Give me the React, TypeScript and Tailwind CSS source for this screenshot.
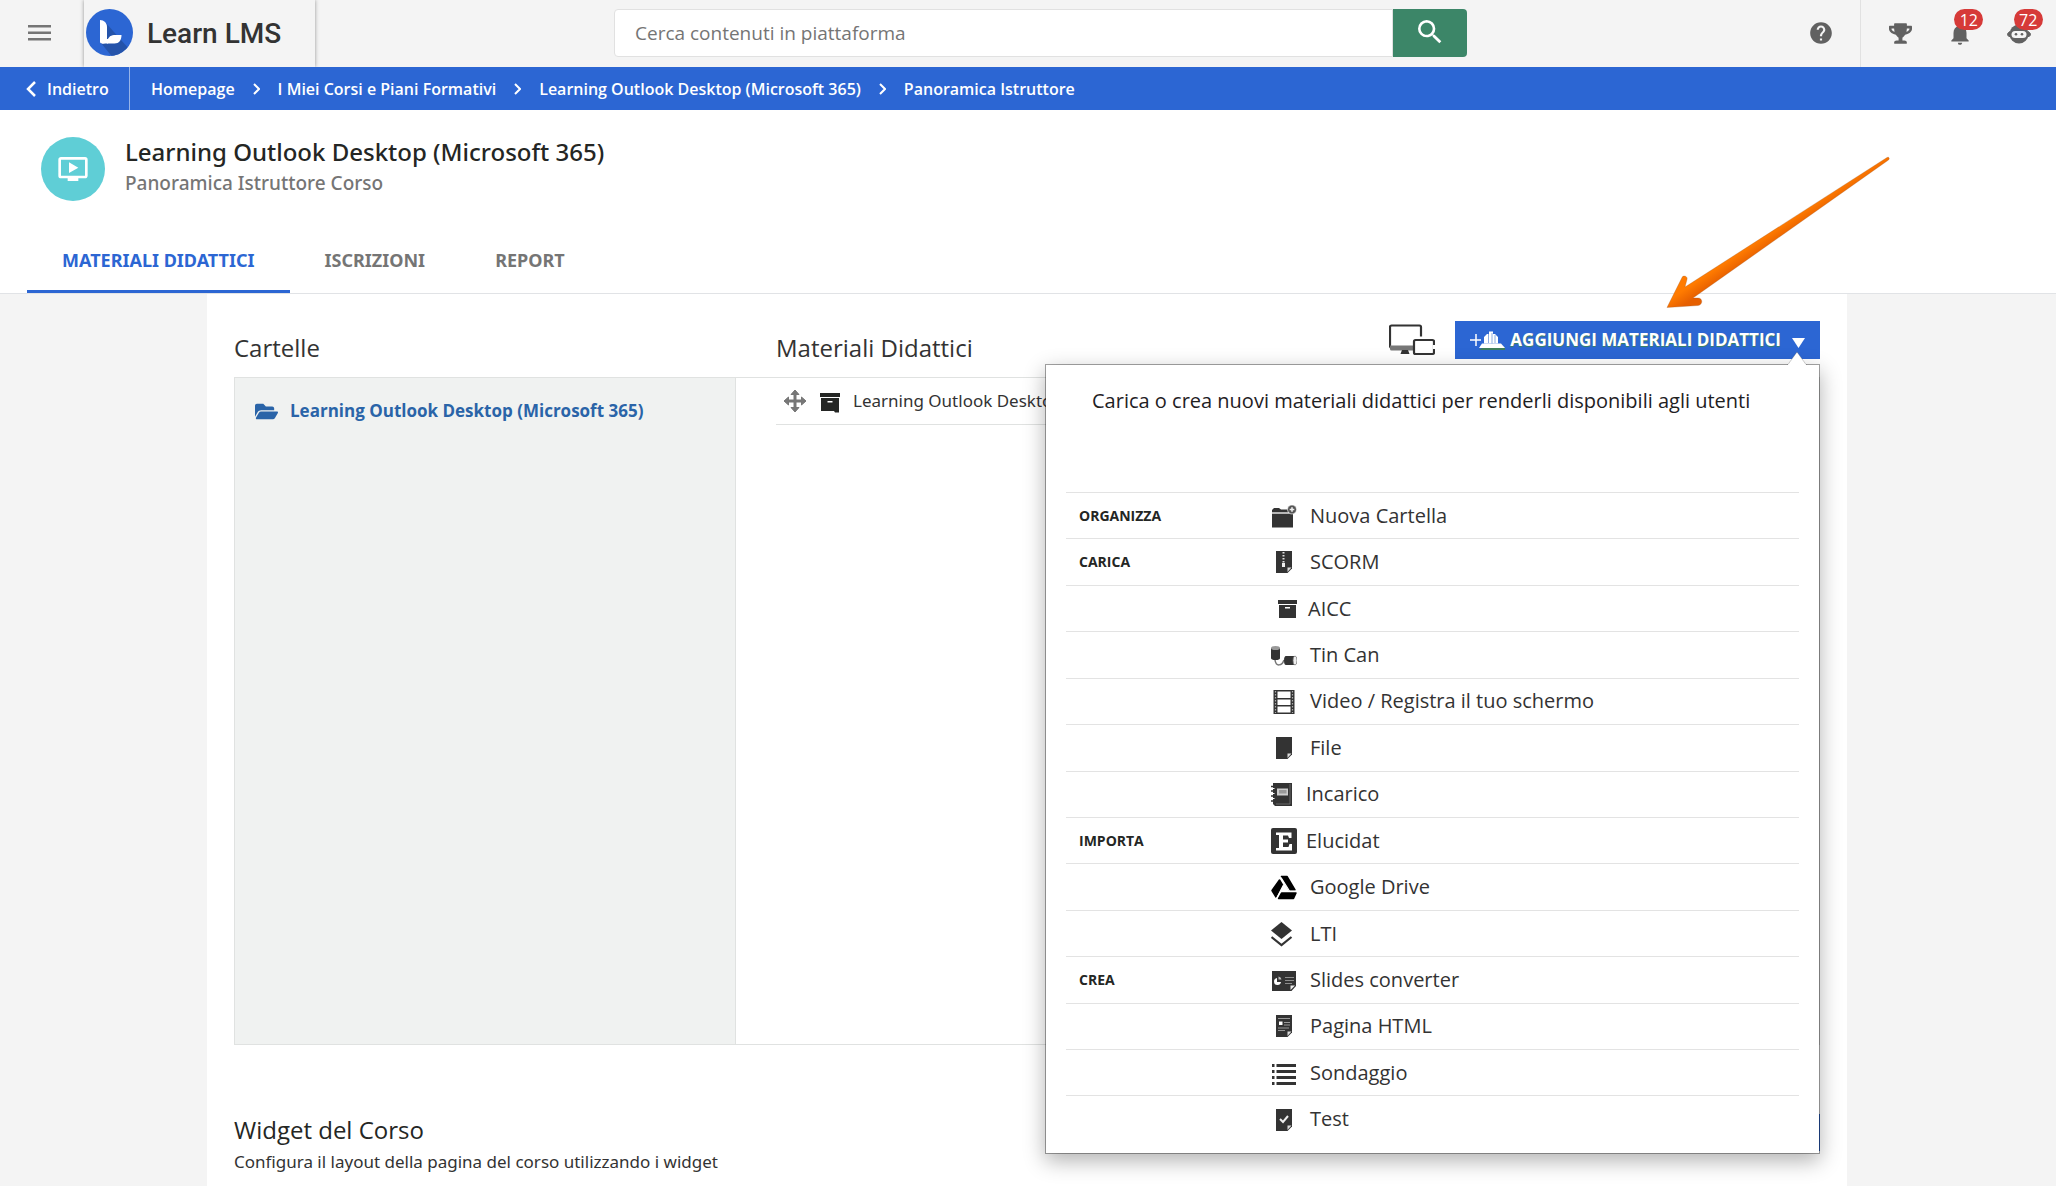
import React from "react";
import { MdHelp, MdNotifications, MdOndemandVideo, MdSearch } from "react-icons/md";
import { FaFolderOpen, FaTrophy } from "react-icons/fa";

const INK = "#333333";

function Glyph({ children }: { children: React.ReactNode }) {
  return (
    <svg viewBox="0 0 26 28" className="h-7 w-[26px] shrink-0" fill={INK} aria-hidden="true">
      {children}
    </svg>
  );
}

const page = "M5 3h16v17.500l-4.500 4.500H5z";
const fold = "M16.500 24v-4.500H20.500z";

const icons = {
  folder: (
    <Glyph>
      <path d="M1 10.500V8L3 6h5l2 1.500h7v3zM1 11.500h21v14H1z" />
      <path d="M1 11h17" stroke="#fff" strokeWidth="0.6" />
      <circle cx="21" cy="7.500" r="4.500" fill="#555" stroke="#fff" strokeWidth="0.6" />
      <path d="M21 5.200v4.600M18.700 7.500h4.600" stroke="#eee" strokeWidth="1.600" />
    </Glyph>
  ),
  scorm: (
    <Glyph>
      <path d={page} />
      <path d="M12.500 4v12" stroke="#ddd" strokeWidth="2" strokeDasharray="1.500 1.500" />
      <path d="M11 15h3v4h-3z" fill="#eee" />
      <path d={fold} fill="#ddd" />
    </Glyph>
  ),
  aicc: (
    <Glyph>
      <path d="M7 5h19v4H7zM8 10h17v13H8z" />
      <path d="M14 12h5v1.500h-5z" fill="#fff" />
    </Glyph>
  ),
  tincan: (
    <Glyph>
      <path d="M0 7h9v10a4.500 2 0 0 1-9 0z" />
      <ellipse cx="4.500" cy="7" rx="4.500" ry="2" fill="#999" />
      <path d="M4 19c1 7 7 6 9 0" fill="none" stroke="#777" strokeWidth="1.500" />
      <path d="M15 15h9v9h-9a2 4.500 0 0 1 0-9z" />
      <ellipse cx="24" cy="19.500" rx="2" ry="4.500" fill="#eee" stroke="#777" strokeWidth="0.8" />
    </Glyph>
  ),
  video: (
    <Glyph>
      <path d="M2.500 3h21v24h-21z" />
      <path d="M6.500 4.500h13V11h-13zM6.500 12.500h13v5.500h-13zM6.500 19.500h13v6h-13z" fill="#fff" />
      <path d="M4.500 4v22M21.500 4v22" stroke="#aaa" strokeWidth="1.200" strokeDasharray="1.500 1.500" />
    </Glyph>
  ),
  file: (
    <Glyph>
      <path d={page} />
      <path d={fold} fill="#ddd" />
    </Glyph>
  ),
  task: (
    <Glyph>
      <path d="M2 3h19v23H4l-2-2z" />
      <path d="M0 6.500h4M0 11h4M0 16h4M0 21h4" stroke="#333" strokeWidth="1.500" />
      <path d="M1 8.500h2.500M1 13.500h2.500M1 18.500h2.500" stroke="#fff" strokeWidth="1.200" />
      <path d="M6 8.500h11v7H6z" fill="#ccc" />
      <path d="M8 10h7.500v3.500H8z" fill="#999" />
      <path d="M19 4v20H5" fill="none" stroke="#777" strokeWidth="0.8" />
    </Glyph>
  ),
  elucidat: (
    <Glyph>
      <rect y="1" width="26" height="26" rx="2" />
      <path
        d="M5 5.500h15.500v5.500h-2.500l-1-2.500h-5v4h5v3h-5v4.500h5.500l1-3h2.500v6.500H5v-2.500h3v-13H5z"
        fill="#fff"
      />
    </Glyph>
  ),
  drive: (
    <Glyph>
      <g fill="#000" stroke="#000" strokeWidth="1.500" strokeLinejoin="round">
        <path d="M10.500 3.500h5.500l8 13.500h-5.500z" />
        <path d="M8.500 7l3 5L5 24l-4-6.500z" />
        <path d="M10.500 20H25l-2.500 5.500h-15z" />
      </g>
      <path d="M10 4.500L18.500 18H26M12.500 12L5.500 25.500" stroke="#fff" strokeWidth="1.200" fill="none" />
    </Glyph>
  ),
  lti: (
    <Glyph>
      <path d="M10.500 2l10.500 8.500L10.500 19 0 10.500z" />
      <path d="M0.500 17l10 8 10-8" fill="none" stroke={INK} strokeWidth="2.200" />
    </Glyph>
  ),
  slides: (
    <Glyph>
      <path d="M1 5h24v15l-4.500 5H1z" />
      <path d="M6 12a3.500 3.500 0 1 0 4 4H6z" fill="#fff" />
      <path d="M7.500 10.500a3.500 3.500 0 0 1 3 3h-3z" fill="#bbb" />
      <path d="M14 11.500h9M14 14.500h9M14 17.500h7" stroke="#999" strokeWidth="0.9" />
      <path d="M19.500 24v-4.500H24z" fill="#eee" />
    </Glyph>
  ),
  html: (
    <Glyph>
      <path d={page} />
      <path d="M7 6.500h12M13 10.500h6M13 13h6M7 16h11M7 18.500h7" stroke="#999" strokeWidth="1" />
      <path d="M8 9.500h3.500V13H8z" fill="#fff" />
      <path d={fold} fill="#ddd" />
    </Glyph>
  ),
  survey: (
    <Glyph>
      <path d="M5.500 5H25v3H5.500zM5.500 11H25v3H5.500zM5.500 17H25v3H5.500zM5.500 23H25v3H5.500z" />
      <path d="M1 5h2.500v3H1zM1 11h2.500v3H1zM1 17h2.500v3H1zM1 23h2.500v3H1z" />
    </Glyph>
  ),
  test: (
    <Glyph>
      <path d="M5 4h16v17.500l-4.500 4.500H5z" />
      <path d="M9 14l3 3 5-6" fill="none" stroke="#eee" strokeWidth="2" />
      <path d="M16.500 25v-4.500h4z" fill="#ddd" />
    </Glyph>
  ),
};

const menu: { group?: string; label: string; icon: keyof typeof icons; gap?: string }[] = [
  { group: "ORGANIZZA", label: "Nuova Cartella", icon: "folder" },
  { group: "CARICA", label: "SCORM", icon: "scorm" },
  { label: "AICC", icon: "aicc", gap: "gap-[11px]" },
  { label: "Tin Can", icon: "tincan" },
  { label: "Video / Registra il tuo schermo", icon: "video" },
  { label: "File", icon: "file" },
  { label: "Incarico", icon: "task", gap: "gap-[9px]" },
  { group: "IMPORTA", label: "Elucidat", icon: "elucidat", gap: "gap-[9px]" },
  { label: "Google Drive", icon: "drive" },
  { label: "LTI", icon: "lti" },
  { group: "CREA", label: "Slides converter", icon: "slides" },
  { label: "Pagina HTML", icon: "html" },
  { label: "Sondaggio", icon: "survey" },
  { label: "Test", icon: "test" },
];

function Logo() {
  return (
    <svg viewBox="0 0 47 47" className="size-[47px]" aria-hidden="true">
      <defs>
        <clipPath id="disc">
          <circle cx="23.500" cy="23.500" r="23.500" />
        </clipPath>
      </defs>
      <circle cx="23.500" cy="23.500" r="23.500" fill="#2c66d3" />
      <path d="M20 14l30 34-22 2L15 34z" fill="#2453aa" clipPath="url(#disc)" />
      <path d="M14 11c4 0 7 3 7 7v11c0 3-1 5-3 5.500h-2c-1.500 0-2-1-2-2z" fill="#fff" />
      <path d="M21 34.500c0-5 3-8.500 7-8.500h7.500c0 5-2.500 8.500-7 8.500z" fill="#fff" />
      <path d="M16 30h7l-1 4.500h-6z" fill="#fff" />
    </svg>
  );
}

function Robot() {
  return (
    <svg viewBox="0 0 24 24" className="size-6" aria-hidden="true">
      <circle cx="12" cy="12" r="9.500" fill="#616161" />
      <path d="M2.500 9.500L0 12.500l2.500 2.500zM21.500 9.500l2.500 3-2.500 2.500z" fill="#616161" stroke="#616161" />
      <rect x="4.500" y="9" width="15" height="7" rx="3.500" fill="#f4f4f4" />
      <circle cx="9" cy="12.200" r="1.300" fill="#616161" />
      <circle cx="15" cy="12.200" r="1.300" fill="#616161" />
    </svg>
  );
}

function Badge({ children }: { children: React.ReactNode }) {
  return (
    <span className="absolute left-6 top-[9px] flex h-[21px] w-[29px] items-center justify-center rounded-full bg-[#d63a38] text-base leading-none text-white">
      {children}
    </span>
  );
}

function Header() {
  return (
    <header className="flex h-[67px] items-stretch justify-between bg-[#f4f4f4]">
      <div className="flex items-stretch">
        <button aria-label="Menu" className="flex w-[84px] items-center pb-0.5 pl-7">
          <svg viewBox="0 0 23 16" className="h-4 w-[23px]" fill="#757575" aria-hidden="true">
            <path d="M0 0h23v2.500H0zM0 6.500h23v2.500H0zM0 13h23v2.500H0z" />
          </svg>
        </button>
        <a href="#" className="flex w-[231px] items-center gap-3.5 pl-0.5 shadow-[0_0_4px_rgba(0,0,0,0.4)]">
          <span className="pb-0.5">
            <Logo />
          </span>
          <span className="font-['Roboto',sans-serif] text-[28px] font-medium leading-8 text-[#333]">Learn LMS</span>
        </a>
      </div>
      <form className="mb-2.5 mt-[9px] flex w-[853px]">
        <input
          type="search"
          aria-label="Cerca contenuti in piattaforma"
          placeholder="Cerca contenuti in piattaforma"
          className="min-w-0 flex-1 rounded-l border border-[#e1e1e1] bg-white pl-5 text-[19px] text-[#333] placeholder:text-[#757575]"
        />
        <button type="button" aria-label="Cerca" className="flex w-[74px] items-center justify-center rounded-r bg-[#3c8668] pb-0.5 text-white">
          <MdSearch className="size-8" />
        </button>
      </form>
      <div className="flex w-[290px] items-stretch text-[#616161]">
        <button aria-label="Aiuto" className="flex w-[95px] items-center justify-end border-r border-[#e1e1e1] pb-0.5 pr-[26px]">
          <MdHelp className="size-[26px]" />
        </button>
        <div className="flex flex-1 pl-2.5 pr-[7px]">
          <button aria-label="Premi" className="flex flex-1 items-center justify-center">
            <FaTrophy className="size-[23px]" />
          </button>
          <button aria-label="Notifiche" className="relative flex flex-1 items-center justify-center">
            <MdNotifications className="size-[26px]" />
            <Badge>12</Badge>
          </button>
          <button aria-label="Assistente" className="relative flex flex-1 items-center justify-center">
            <Robot />
            <Badge>72</Badge>
          </button>
        </div>
      </div>
    </header>
  );
}

const crumbs = ["Homepage", "I Miei Corsi e Piani Formativi", "Learning Outlook Desktop (Microsoft 365)", "Panoramica Istruttore"];

function Breadcrumbs() {
  return (
    <nav className="flex h-[43px] items-stretch bg-[#2c66d3] font-semibold text-white">
      <a href="#" className="flex w-[130px] items-center gap-[11px] border-r border-white/50 pl-[26px]">
        <svg viewBox="0 0 10 16" className="h-4 w-2.5" fill="none" stroke="currentColor" strokeWidth="2.500" aria-hidden="true">
          <path d="M9 1L2 8l7 7" />
        </svg>
        Indietro
      </a>
      <ol className="flex items-center pl-[21px]">
        {crumbs.map((c, i) => (
          <li key={c} className="flex items-center">
            {i > 0 && (
              <svg viewBox="0 0 7 12" className="mx-[18px] h-3 w-[7px]" fill="none" stroke="currentColor" strokeWidth="2" aria-hidden="true">
                <path d="M1 1l5 5-5 5" />
              </svg>
            )}
            <a href="#">{c}</a>
          </li>
        ))}
      </ol>
    </nav>
  );
}

function CourseHead() {
  return (
    <section className="border-b border-[#e1e3e6] bg-white pt-[27px]">
      <div className="flex gap-5 pl-[41px]">
        <span className="flex size-16 items-center justify-center rounded-full bg-[#5fced6] text-white">
          <MdOndemandVideo className="size-8" />
        </span>
        <div className="font-['Noto_Sans',sans-serif] font-medium">
          <h1 className="text-2xl leading-[30px] text-[#242624]">Learning Outlook Desktop (Microsoft 365)</h1>
          <p className="text-[19px] leading-8 text-[#757575]">Panoramica Istruttore Corso</p>
        </div>
      </div>
      <div
        role="tablist"
        className="mt-[26px] flex h-[66px] pl-[27px] font-['Noto_Sans',sans-serif] text-lg font-bold text-[#757575]"
      >
        <button role="tab" aria-selected="true" className="border-b-3 border-[#2c66d3] px-[35px] pt-[3px] text-[#2c66d3]">
          MATERIALI DIDATTICI
        </button>
        <button role="tab" aria-selected="false" className="px-[35px]">
          ISCRIZIONI
        </button>
        <button role="tab" aria-selected="false" className="px-[35px]">
          REPORT
        </button>
      </div>
    </section>
  );
}

function Devices() {
  return (
    <svg viewBox="0 0 46 34" className="mt-[3px] h-[34px] w-[46px]" fill="none" aria-hidden="true">
      <path d="M24 23.500H2.500a1.500 1.500 0 0 1-1.500-1.500V3a1.500 1.500 0 0 1 1.500-1.500h28A1.500 1.500 0 0 1 32 3v9.500" stroke={INK} strokeWidth="2.200" />
      <path d="M1 21.500h23v5H2.500A1.500 1.500 0 0 1 1 25z" fill="#777" />
      <path d="M13 26h6l1.500 4h-9z" fill={INK} />
      <rect x="25" y="16" width="20" height="14" rx="1.500" stroke={INK} strokeWidth="2.200" fill="#fff" />
      <path d="M45 21v4" stroke="#fff" strokeWidth="2.200" />
    </svg>
  );
}

function AddMenu() {
  return (
    <div className="absolute right-0 top-[43px] z-10 w-[775px] border border-black/35 bg-white bg-clip-padding px-5 pb-[11px] pt-5 shadow-[0_7px_20px_rgba(0,0,0,0.3)]">
      <svg viewBox="0 0 20 15" className="absolute -top-3.5 right-3 h-[15px] w-5" aria-hidden="true">
        <path d="M0 14.500L10 1l10 13.500V15H0z" fill="#fff" />
        <path d="M0 13.500h1L10 1l9 12.500h1" fill="none" stroke="#000" strokeOpacity="0.2" />
      </svg>
      <p className="mb-[75px] pl-[26px] text-xl leading-8 text-[#1f211f]">
        Carica o crea nuovi materiali didattici per renderli disponibili agli utenti
      </p>
      <ul className="flex min-h-[650px] flex-col">
        {menu.map((m) => (
          <li key={m.label} className="flex flex-1 items-center border-t border-[#e3e3e3]">
            <span className="w-[205px] pl-[13px] text-sm font-bold text-[#242624]">{m.group}</span>
            <a href="#" className={`flex items-center text-xl leading-8 text-[#333] ${m.gap ?? "gap-[13px]"}`}>
              {icons[m.icon]}
              {m.label}
            </a>
          </li>
        ))}
      </ul>
    </div>
  );
}

function AddButton() {
  return (
    <div className="relative">
      <button
        aria-expanded="true"
        className="flex h-[38px] items-center gap-[5px] bg-[#2c66d3] pl-[15px] pr-[15px] text-[17px] font-bold text-white [text-shadow:0_1px_1px_rgba(60,140,60,0.8)]"
      >
        <svg viewBox="0 0 35 20" className="h-5 w-[35px]" fill="#fff" aria-hidden="true">
          <path d="M6 4v12M0 10h11" stroke="#fff" strokeWidth="1.500" />
          <path d="M12 17l4-4h14l5 4v2H9z" fill="#3f7f5c" transform="translate(0 1)" />
          <path d="M12 13.500h19l4 4.500H9z" />
          <path d="M14 13.500V7l3-3h2V1.500h4V4h2l3 3v6.500z" />
          <path d="M18.500 4v9M22 3v10.500M25 5v8" stroke="#6f97d8" strokeWidth="0.800" />
        </svg>
        AGGIUNGI MATERIALI DIDATTICI
        <svg viewBox="0 0 13 10" className="ml-1.5 mt-1.5 h-2.5 w-[13px]" fill="#fff" aria-hidden="true">
          <path d="M0 0h13L6.500 10z" />
        </svg>
      </button>
      <AddMenu />
    </div>
  );
}

export default function App() {
  return (
    <div className="relative flex min-h-screen flex-col overflow-x-clip bg-[#f4f4f4] font-['Open_Sans',sans-serif] text-base text-[#333]">
      <Header />
      <Breadcrumbs />
      <CourseHead />
      <main className="flex flex-1 pr-0.5">
        <div className="mx-auto w-full max-w-[1640px] bg-white px-[27px]">
          <div className="flex items-start pb-[13px] pt-[27px]">
            <h2 className="mt-[11px] w-[542px] text-2xl leading-8">Cartelle</h2>
            <h2 className="mt-[11px] text-2xl leading-8">Materiali Didattici</h2>
            <div className="ml-auto flex gap-5">
              <Devices />
              <AddButton />
            </div>
          </div>
          <div className="flex min-h-[668px] border border-[#e0e2e1]">
            <div className="w-[501px] border-r border-[#e0e2e1] bg-[#f0f2f1] px-5 pt-[17px]">
              <a href="#" className="flex items-center gap-3 text-[17px] font-bold leading-8 text-[#2a64a8]">
                <FaFolderOpen className="size-[23px]" />
                Learning Outlook Desktop (Microsoft 365)
              </a>
            </div>
            <div className="min-w-0 flex-1 pl-10">
              <div className="flex h-[47px] items-center border-b border-[#e0e2e1] pl-2">
                <svg viewBox="0 0 22 22" className="size-[22px]" fill="#777" aria-hidden="true">
                  <path d="M11 0l4 4.500h-3V10h5.500V7l4.500 4-4.500 4v-3H12v5.500h3L11 22l-4-4.500h3V12H4.500v3L0 11l4.500-4v3H10V4.500H7z" stroke="#777" />
                </svg>
                <svg viewBox="0 0 20 20" className="ml-3.5 mt-1 size-5" fill="#242624" aria-hidden="true">
                  <path d="M0 0h20v4H0zM1 5h18v14.500h-4L14 18H1z" />
                  <path d="M7.500 8h5v1.500h-5z" fill="#fff" />
                </svg>
                <span className="ml-[13px] font-['Noto_Sans',sans-serif] text-[17px] leading-8">
                  Learning Outlook Desktop (Microsoft 365)
                </span>
              </div>
            </div>
          </div>
          <div className="mt-[69px] flex items-start justify-between">
            <div>
              <h2 className="text-2xl leading-8 text-[#242624]">Widget del Corso</h2>
              <p className="font-['Noto_Sans',sans-serif] text-[17px] leading-8">
                Configura il layout della pagina del corso utilizzando i widget
              </p>
            </div>
            <span className="h-[37px] w-40 bg-[#2c66d3]" />
          </div>
        </div>
      </main>
      <svg viewBox="1666 155 226 155" className="pointer-events-none absolute right-[165px] top-[155px] h-[155px] w-[226px]" aria-hidden="true">
        <defs>
          <linearGradient id="arrow" gradientUnits="userSpaceOnUse" x1="1684" y1="284" x2="1694" y2="299">
            <stop offset="0.300" stopColor="#ff7b00" />
            <stop offset="1" stopColor="#e65f00" />
          </linearGradient>
        </defs>
        <path
          d="M1668 307.500l15-30c1-2.500 6-1.500 5 2l-2 7.500L1888 157.500c2-1 3 1 1.500 2.500L1694 298h5c5 0 5 7 0 7.500z"
          fill="url(#arrow)"
          stroke="#a05a28"
          strokeOpacity="0.500"
          strokeWidth="0.600"
        />
      </svg>
    </div>
  );
}
